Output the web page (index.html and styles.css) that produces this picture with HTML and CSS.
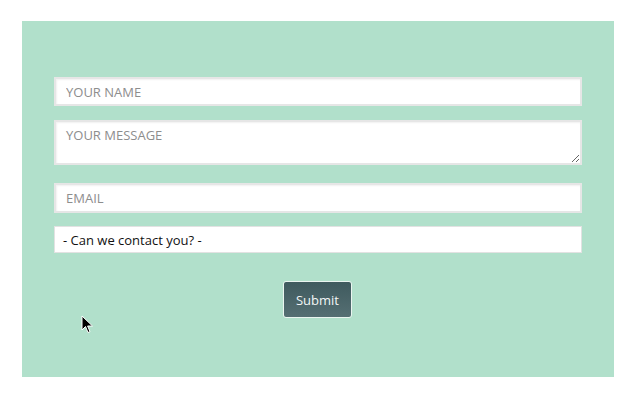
FILE: index.html
```html
<!DOCTYPE html>
<html>
<head>
<meta charset="utf-8">
<link rel="stylesheet" href="styles.css">
</head>
<body>
<div class="panel">
  <form class="form">
    <input class="field field-name" type="text" placeholder="YOUR NAME">
    <textarea class="field field-msg" placeholder="YOUR MESSAGE"></textarea>
    <input class="field field-email" type="text" placeholder="EMAIL">
    <div class="select">- Can we contact you? -</div>
    <div class="actions"><button type="button" class="submit">Submit</button></div>
  </form>
  <svg class="cursor" width="13" height="19" viewBox="0 0 13 19">
    <path d="M1 1 L1 15 L4.5 11.5 L7 17.5 L9 16.6 L6.6 11 L11.5 11 Z" fill="#000" stroke="#fff" stroke-width="1"/>
  </svg>
</div>
</body>
</html>
```
FILE: styles.css
```css
html, body {
  margin: 0;
  padding: 0;
  background: #ffffff;
}
body {
  padding: 21px 0 0 22px;
  font-family: "Open Sans", "Liberation Sans", sans-serif;
}
.panel {
  position: relative;
  width: 592px;
  height: 356px;
  box-sizing: border-box;
  background: #b1e0cb;
  padding: 56px 32px 0 32px;
}
.form {
  display: flex;
  flex-direction: column;
  width: 528px;
}
.field {
  box-sizing: border-box;
  width: 528px;
  margin: 0;
  border: 2px solid #e6e6e6;
  background: #ffffff;
  box-shadow: inset 1px 1px 2px rgba(0,0,0,0.06);
  font-family: "Open Sans", "Liberation Sans", sans-serif;
  font-size: 13px;
  color: #333;
  padding: 0 10px;
  outline: none;
}
.field::placeholder {
  color: #8d8d8d;
  opacity: 1;
}
.field-name {
  height: 29px;
}
.field-msg {
  height: 45px;
  margin-top: 14px;
  padding-top: 4px;
  resize: vertical;
  line-height: 18px;
}
.field-email {
  height: 30px;
  margin-top: 18px;
}
.select {
  box-sizing: border-box;
  height: 27px;
  margin-top: 13px;
  border: 1px solid #e2e2e2;
  background: #ffffff;
  font-size: 13px;
  color: #111;
  padding: 0 8px;
  display: flex;
  align-items: center;
}
.actions {
  display: flex;
  justify-content: center;
  margin-top: 28px;
}
.submit {
  width: 69px;
  height: 37px;
  box-sizing: border-box;
  border: 1px solid #eaf5f0;
  border-radius: 3px;
  background: linear-gradient(#3f5a5e, #556f73);
  color: #f2f6f6;
  font-family: "Open Sans", "Liberation Sans", sans-serif;
  font-size: 13px;
  padding: 0;
  margin-left: -1px;
}
.cursor {
  position: absolute;
  left: 59px;
  top: 294px;
}
```
